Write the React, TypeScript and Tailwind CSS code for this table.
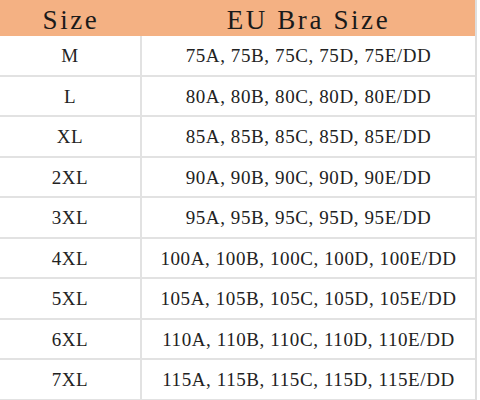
import React from "react";

const rows: [string, string][] = [
  ["M", "75A, 75B, 75C, 75D, 75E/DD"],
  ["L", "80A, 80B, 80C, 80D, 80E/DD"],
  ["XL", "85A, 85B, 85C, 85D, 85E/DD"],
  ["2XL", "90A, 90B, 90C, 90D, 90E/DD"],
  ["3XL", "95A, 95B, 95C, 95D, 95E/DD"],
  ["4XL", "100A, 100B, 100C, 100D, 100E/DD"],
  ["5XL", "105A, 105B, 105C, 105D, 105E/DD"],
  ["6XL", "110A, 110B, 110C, 110D, 110E/DD"],
  ["7XL", "115A, 115B, 115C, 115D, 115E/DD"],
];

export default function App() {
  return (
    <div
      className="w-[480px] h-[400px] bg-white overflow-hidden"
      style={{ fontFamily: '"Liberation Serif", "Noto Sans CJK SC", serif' }}
    >
      <div className="w-[477px] border-r-2 border-[#dedede]">
        <div className="grid grid-cols-[142px_1fr] h-[36px] bg-[#f4b183] text-[#1a1a1a] text-[27px] tracking-[2.6px]">
          <div className="flex items-center justify-center pb-[2px]">Size</div>
          <div className="flex items-center justify-center pb-[2px]">EU Bra Size</div>
        </div>
        {rows.map(([s, eu]) => (
          <div
            key={s}
            className="grid grid-cols-[142px_1fr] h-[40.5px] border-b-2 border-[#e2e2e2] text-[19px] text-[#222222] tracking-[0.6px]"
          >
            <div className="flex items-center justify-center border-r-2 border-[#e2e2e2] pt-[2px]">{s}</div>
            <div className="flex items-center justify-center pt-[2px]">{eu}</div>
          </div>
        ))}
      </div>
    </div>
  );
}
